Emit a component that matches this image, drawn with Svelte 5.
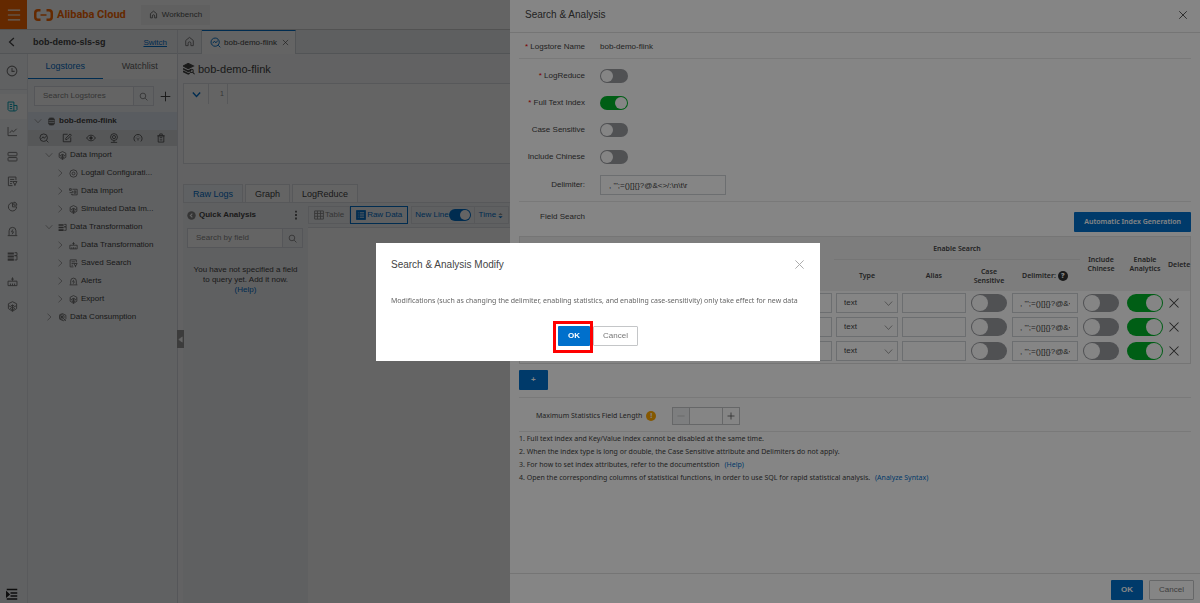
<script>
  const icons = {
    menu: '<path d="M1 2.500h14M1 8h14M1 13.500h14"/>',
    clock: '<circle cx="8" cy="8" r="6.500"/><path d="M8 4v4.500h3.500"/>',
    doc: '<path d="M1.500 1.500h8.500v13H3.500l-2-2zM10 6.500h4.500v6l-2 2H10M4 5h3.500M4 8h3.500M4 11h3.500"/>',
    chart: '<path d="M1.500 1.500v12.500h13M4 10l3-3.500 2.500 2L14 4"/>',
    servers: '<rect x="1.500" y="2" width="13" height="5" rx="1"/><rect x="1.500" y="9.500" width="13" height="5" rx="1"/>',
    saved: '<path d="M13 6V1.500H2v12.500h6M4.500 5h6M4.500 8h3.500M4.500 11h2.500M8.500 8h6l-3 5zM11.500 11v3.500"/>',
    pie: '<path d="M8 2.500a6 6 0 1 0 6 6H8zM10 1.500v4.500h4.500a5 5 0 0 0-4.500-4.500z"/>',
    alert: '<path d="M3 13.500V7a5 5 0 0 1 10 0v6.500M1 14h14M8.500 5L6.500 8.500h3L7.500 12"/>',
    stack: '<path d="M1 3.500h9M1 8h9M1 12.500h9" stroke-width="3"/><path d="M11 2.500h3.500v4H11M11 7h3.500v6H11"/>',
    robot: '<path d="M1.500 7.500h13V14h-13zM8 7V2M6 4.500h4M5 14v-3M8 14v-3M11 14v-3"/>',
    cube: '<path d="M8 1l6 3v2.500L8 10 2 6.500V4zM2 6.500V11l6 4 6-4V6.500M8 5v10M5.500 6L8 7.500 10.500 6M4.500 10.500L8 13l3.500-2.500"/>',
    indent: '<path d="M1 2h14M6 6.500h9M6 10.500h9M1 14.500h14" stroke-width="2"/><path d="M0.500 5l4 3.500-4 3.500z" fill="currentColor"/>',
    home: '<path d="M2.500 14V6.500L8 2l5.500 4.500V14H10v-3.500a2 2 0 0 0-4 0V14z"/>',
    search: '<circle cx="7" cy="7" r="5"/><path d="M11 11l4 4"/>',
    look: '<circle cx="7.500" cy="7.500" r="6"/><path d="M12 12l3 3M4 9l2.500-3 2 2.500L11.500 5"/>',
    edit: '<path d="M9 2H2v12h12V7M6 10.500V8.500L13 1.500l2 2L8 10.500z"/>',
    eye: '<path d="M1 8c3.500-6 10.500-6 14 0-3.500 6-10.500 6-14 0z"/><circle cx="8" cy="8" r="2" fill="currentColor"/>',
    cam: '<circle cx="8" cy="6.500" r="5.500"/><circle cx="8" cy="6.500" r="2.500"/><path d="M8 12v2.500M3 15h10"/>',
    gauge: '<path d="M3.500 13.500a6.500 6.500 0 1 1 9 0M8 12V8M4.500 8h1M8 4.500v1M11.500 8h-1"/>',
    trash: '<path d="M3.500 4.500h9v10h-9zM2 4.500h12M6 4V1.500h4V4M6 7.500h4M6 11h4"/>',
    db: '<path d="M3 3.500c0-2.500 10-2.500 10 0v9c0 2.500-10 2.500-10 0z" fill="currentColor"/><path d="M3 6.500h10M3 10h10" stroke="#dde4ec"/>',
    target: '<circle cx="8" cy="8" r="6.500"/><circle cx="8" cy="8" r="2.500"/>',
    import: '<path d="M6 4h8.500v10H5M1 3h3v3H1zM1 10h5V7M3.500 13h3M9 7h3v4H9z"/>',
    consume: '<path d="M3 3l5-2 6 3v6l-4 4-7-3z"/><circle cx="7" cy="7" r="4"/><circle cx="7" cy="7" r="1.500" fill="currentColor"/><path d="M10 10l4 4"/>',
    right: '<path d="M5 1.500L12 8l-7 6.500"/>',
    left: '<path d="M11 1.500L4 8l7 6.500" stroke-width="2"/>',
    down: '<path d="M1.500 4.500L8 11.500l6.500-7"/>',
    fold: '<path d="M1.500 4.500L8 11.500l6.500-7" stroke-width="2.500"/>',
    close: '<path d="M2 2l12 12M14 2L2 14"/>',
    plus: '<path d="M8 1v14M1 8h14"/>',
    minus: '<path d="M1 8h14"/>',
    layers: '<path d="M0 4l7-3.500L14 4 7 7.500z" fill="currentColor"/><path d="M0 7.500l7 3.500 4-2M0 11l7 3.500 2-1" stroke-width="2.200"/><circle cx="11.500" cy="10.500" r="2.200"/><path d="M13 12.500l2.500 2.500"/>',
    grid: '<path d="M1 1.500h14v13H1zM1 5.500h14M1 10h14M5.500 1.500v13M10.500 1.500v13"/>',
    list: '<rect x="1" y="1" width="14" height="14" fill="currentColor"/><path d="M3 4.500h1M6 4.500h7M3 8h1M6 8h7M3 11.500h1M6 11.500h7" stroke="#fff"/>',
    back: '<circle cx="8" cy="8" r="7.500" fill="currentColor" stroke="none"/><path d="M9.500 4.500L6 8l3.500 3.500" stroke="#fff" stroke-width="2"/>',
    dots: '<path d="M8 1v3M8 6.500v3M8 12v3" stroke-width="2.500"/>',
    sort: '<path d="M3 7l5-5 5 5z" fill="#999" stroke="none"/><path d="M3 9.500l5 5 5-5z" fill="currentColor" stroke="none"/>',
    caret: '<path d="M12 2v12L4 8z" fill="currentColor"/>'
  };
  const rail = ['doc', 'chart', 'servers', 'saved', 'pie', 'alert', 'stack', 'robot', 'cube'];
  const actions = ['look', 'edit', 'eye', 'cam', 'gauge', 'trash'];
  const tree = [
    { level: 1, open: true, icon: 'cube', text: 'Data Import' },
    { level: 2, icon: 'target', text: 'Logtail Configurati...' },
    { level: 2, icon: 'import', text: 'Data Import' },
    { level: 2, icon: 'cube', text: 'Simulated Data Im...' },
    { level: 1, open: true, icon: 'stack', text: 'Data Transformation' },
    { level: 2, icon: 'robot', text: 'Data Transformation' },
    { level: 2, icon: 'saved', text: 'Saved Search' },
    { level: 2, icon: 'alert', text: 'Alerts' },
    { level: 2, icon: 'cube', text: 'Export' },
    { level: 1, icon: 'consume', text: 'Data Consumption' }
  ];
  const switches = [
    { id: 'reduce', label: 'LogReduce', required: true, on: false },
    { id: 'fulltext', label: 'Full Text Index', required: true, on: true },
    { id: 'case', label: 'Case Sensitive', on: false },
    { id: 'chinese', label: 'Include Chinese', on: false }
  ];
  const delimiter = ', \'";=()[]{}?@&<>/:\\n\\t\\r';
  const rows = [1, 2, 3];
</script>

{#snippet icon(name, size = 10)}
  <svg class="icon" width={size} height={size} viewBox="0 0 16 16" aria-hidden="true">{@html icons[name]}</svg>
{/snippet}

<div class="page">
  <header class="top">
    <button class="burger" aria-label="Menu">{@render icon('menu', 14)}</button>
    <a class="logo" href="#home">
      <svg width="19" height="12" viewBox="0 0 38 24" aria-hidden="true">
        <path d="M13 2.500H8Q2.500 2.500 2.500 8v8q0 5.500 5.500 5.500h5M25 2.500h5q5.500 0 5.500 5.500v8q0 5.500-5.500 5.500h-5" fill="none" stroke="currentColor" stroke-width="5"/>
        <path d="M13 12h12" stroke="currentColor" stroke-width="3"/>
      </svg>
      <span>Alibaba Cloud</span>
    </a>
    <button class="workbench">{@render icon('home', 9)}Workbench</button>
  </header>

  <div class="body">
    <div class="side">
      <div class="project">
        <button class="plain" aria-label="Back">{@render icon('left', 10)}</button>
        <strong>bob-demo-sls-sg</strong>
        <a href="#switch">Switch</a>
      </div>
      <div class="side-body">
        <nav class="rail">
          <button class="rail-item first" aria-label="Recent">{@render icon('clock', 12)}</button>
          {#each rail as name, i}
            <button class="rail-item" class:active={i === 0} aria-label={name}>{@render icon(name, 11)}</button>
          {/each}
          <button class="rail-item last" aria-label="Expand">{@render icon('indent', 12)}</button>
        </nav>
        <div class="panel">
          <div class="panel-tabs">
            <button class="active">Logstores</button>
            <button>Watchlist</button>
          </div>
          <div class="find">
            <input aria-label="Search Logstores" placeholder="Search Logstores" />
            <button class="find-btn" aria-label="Search">{@render icon('search', 9)}</button>
            <button class="plain add" aria-label="Add">{@render icon('plus', 11)}</button>
          </div>
          <div class="node root"><span class="chev">{@render icon('down', 8)}</span>{@render icon('db', 9)}<strong>bob-demo-flink</strong></div>
          <div class="actions">
            {#each actions as name}
              <button class="plain" aria-label={name}>{@render icon(name, 10)}</button>
            {/each}
          </div>
          {#each tree as n}
            <div class="node" class:deep={n.level === 2}>
              <span class="chev">{@render icon(n.open ? 'down' : 'right', 8)}</span>{@render icon(n.icon, 9)}<span>{n.text}</span>
            </div>
          {/each}
        </div>
      </div>
    </div>

    <main>
      <div class="tabs">
        <button class="home" aria-label="Home">{@render icon('home', 11)}</button>
        <div class="tab"><span class="blue">{@render icon('look', 11)}</span><span>bob-demo-flink</span><button class="plain" aria-label="Close tab">{@render icon('close', 7)}</button></div>
      </div>
      <h1>{@render icon('layers', 12)}bob-demo-flink</h1>
      <div class="editor">
        <button class="fold" aria-label="Expand query">{@render icon('fold', 9)}</button>
        <span class="line-no">1</span>
        <textarea aria-label="Query"></textarea>
      </div>
      <div class="views">
        <button class="active">Raw Logs</button>
        <button>Graph</button>
        <button>LogReduce</button>
      </div>
      <div class="results">
        <section class="quick">
          <div class="quick-head"><span class="grey">{@render icon('back', 9)}</span><strong>Quick Analysis</strong><button class="plain" aria-label="More">{@render icon('dots', 10)}</button></div>
          <div class="find field">
            <input aria-label="Search by field" placeholder="Search by field" />
            <button class="find-btn" aria-label="Search fields">{@render icon('search', 9)}</button>
          </div>
          <p>You have not specified a field<br />to query yet. Add it now.<br /><a href="#help">(Help)</a></p>
        </section>
        <section class="logs">
          <div class="toolbar">
            <button class="seg muted">{@render icon('grid', 10)}Table</button>
            <button class="seg chosen">{@render icon('list', 10)}Raw Data</button>
            <label class="seg newline">New Line<input class="toggle blue-toggle" type="checkbox" checked /></label>
            <button class="seg time">Time {@render icon('sort', 7)}</button>
          </div>
          <div class="blank"></div>
        </section>
      </div>
      <button class="handle" aria-label="Collapse">{@render icon('caret', 7)}</button>
    </main>
  </div>
</div>

<div class="mask light"></div>

<aside class="drawer">
  <header><h2>Search &amp; Analysis</h2><button class="plain" aria-label="Close panel">{@render icon('close', 10)}</button></header>
  <div class="content">
    <div class="row name"><span class="label"><i>*</i> Logstore Name</span><span>bob-demo-flink</span></div>
    <div class="group">
      {#each switches as s}
        <div class="row switch">
          <label class="label" for={s.id}>{#if s.required}<i>*</i>{/if} {s.label}</label>
          <input id={s.id} class="toggle" type="checkbox" checked={s.on} />
        </div>
      {/each}
      <div class="row delim">
        <label class="label" for="delim">Delimiter:</label>
        <input id="delim" class="box" value={delimiter} />
      </div>
    </div>
    <div class="row fields"><span class="label">Field Search</span><button class="primary">Automatic Index Generation</button></div>
    <table>
      <colgroup><col /><col class="c66" /><col class="c68" /><col class="c42" /><col class="c70" /><col class="c42" /><col class="c46" /><col class="c22" /></colgroup>
      <thead>
        <tr class="h1"><th rowspan="2">Key Name</th><th colspan="4" class="span">Enable Search</th><th rowspan="2">Include Chinese</th><th rowspan="2">Enable Analytics</th><th rowspan="2" class="tight">Delete</th></tr>
        <tr class="h2"><th>Type</th><th>Alias</th><th>Case Sensitive</th><th><span class="q">Delimiter: <b>?</b></span></th></tr>
      </thead>
      <tbody>
        {#each rows as r}
          <tr>
            <td><input class="box" aria-label="Key name {r}" /></td>
            <td><div class="pick"><select class="box" aria-label="Type {r}"><option>text</option></select>{@render icon('down', 9)}</div></td>
            <td><input class="box" aria-label="Alias {r}" /></td>
            <td><input class="toggle big" type="checkbox" aria-label="Case sensitive {r}" /></td>
            <td><input class="box" aria-label="Delimiter {r}" value={delimiter} /></td>
            <td><input class="toggle big" type="checkbox" aria-label="Include Chinese {r}" /></td>
            <td><input class="toggle big" type="checkbox" checked aria-label="Enable analytics {r}" /></td>
            <td class="tight"><button class="plain" aria-label="Delete {r}">{@render icon('close', 12)}</button></td>
          </tr>
        {/each}
      </tbody>
    </table>
    <button class="primary more">+</button>
    <div class="limit">
      <label for="max">Maximum Statistics Field Length</label><b class="warn">!</b>
      <div class="stepper"><button disabled aria-label="Decrease">{@render icon('minus', 8)}</button><input id="max" /><button aria-label="Increase">{@render icon('plus', 8)}</button></div>
    </div>
    <ol>
      <li>1. Full text index and Key/Value index cannot be disabled at the same time.</li>
      <li>2. When the index type is long or double, the Case Sensitive attribute and Delimiters do not apply.</li>
      <li>3. For how to set index attributes, refer to the documentstion <a href="#docs">(Help)</a></li>
      <li>4. Open the corresponding columns of statistical functions, in order to use SQL for rapid statistical analysis. <a href="#syntax">(Analyze Syntax)</a></li>
    </ol>
  </div>
  <footer><button class="primary">OK</button><button class="ghost">Cancel</button></footer>
</aside>

<div class="mask dark">
  <div class="modal" role="dialog" aria-labelledby="modal-title">
    <header><h2 id="modal-title">Search &amp; Analysis Modify</h2><button class="plain" aria-label="Close dialog">{@render icon('close', 11)}</button></header>
    <p>Modifications (such as changing the delimiter, enabling statistics, and enabling case-sensitivity) only take effect for new data</p>
    <div class="buttons"><span class="marked"><button class="primary">OK</button></span><button class="ghost">Cancel</button></div>
  </div>
</div>

<style>
  :global(body) { font: 8px/12px "Liberation Sans", Arial, sans-serif; color: #444; background: #fff; }
  :global(*) { box-sizing: border-box; }
  button, input, select, textarea { font: inherit; color: inherit; margin: 0; padding: 0; border: 0; background: none; border-radius: 0; outline: 0; }
  h1, h2, p, ol { margin: 0; padding: 0; font-weight: 400; }
  a { color: #0070cc; text-decoration: none; }
  .icon { display: block; flex: none; fill: none; stroke: currentColor; stroke-width: 1.4; }
  .plain { display: grid; place-items: center; }
  .blue { color: #0070cc; }
  .grey { color: #888; }

  .page { min-height: 100vh; display: flex; flex-direction: column; }
  .top { display: flex; align-items: center; height: 30px; border-bottom: 1px solid #d0d0d0; }
  .burger { width: 27px; height: 29px; display: grid; place-items: center; background: #ff6a00; color: #fff; }
  .logo { display: flex; align-items: center; gap: 4px; margin-left: 7px; color: #ff6a00; font: 700 11px/16px Roboto, "Liberation Sans", sans-serif; white-space: nowrap; }
  .workbench { display: flex; align-items: center; gap: 4px; margin-left: 15px; padding: 0 8px; height: 20px; background: #f4f5f5; color: #555; }

  .body { flex: 1; display: flex; }
  .side { width: 178px; flex: none; display: flex; flex-direction: column; background: #f5f7fa; border-right: 1px solid #d8dce2; }
  .project { display: flex; align-items: center; height: 24px; padding: 0 10px 0 7px; border-bottom: 1px solid #d0d5db; background: #eff1f5; }
  .project strong { flex: 1; margin-left: 16px; font-size: 9px; }
  .project a { text-decoration: underline; padding-top: 2px; }
  .side-body { flex: 1; display: flex; }
  .rail { width: 28px; flex: none; display: flex; flex-direction: column; border-right: 1px solid #e2e5ea; color: #777; }
  .rail-item { height: 25px; padding-right: 3px; display: grid; place-items: center; }
  .rail-item.first { height: 36px; padding-bottom: 2px; margin-bottom: 4px; border-bottom: 1px solid #e2e5ea; }
  .rail-item.active { background: #fff; color: #00a2b8; }
  .rail-item.last { margin-top: auto; height: 18px; color: #222; }
  .panel { flex: 1; min-width: 0; }
  .panel-tabs { display: grid; grid-template-columns: 1fr 1fr; height: 25px; font-size: 9px; background: #fff; color: #666; }
  .panel-tabs button { border-bottom: 1px solid transparent; }
  .panel-tabs .active { color: #0070cc; border-color: #0070cc; }
  .find { display: flex; height: 20px; margin: 7px 6px 6px 6px; }
  .find input { flex: 1; min-width: 0; padding: 0 8px; border: 1px solid #d8dce2; background: #fff; }
  .find input::placeholder { color: #888; opacity: 1; }
  .find-btn { width: 20px; display: grid; place-items: center; border: 1px solid #d8dce2; border-left: 0; color: #777; }
  .add { width: 22px; margin-right: -5px; color: #444; }
  .node { display: flex; align-items: center; gap: 3px; height: 18px; padding-left: 17px; white-space: nowrap; }
  .node.deep { padding-left: 28px; }
  .node .chev { margin-right: 2px; color: #888; }
  .node > :global(svg) { color: #666; }
  .node.root { padding-left: 6px; background: #e4ebf5; }
  .actions { display: grid; grid-template-columns: repeat(6, 1fr); padding: 0 4px; height: 16px; background: #dadde0; color: #555; }
  strong, .primary, th { font-weight: 700; }
  th, .fields .primary, .limit label, ol, .modal p { font-family: "Noto Sans", "Liberation Sans", sans-serif; font-size: 7px; }
  th, .fields .primary { font-weight: 600; }

  main { position: relative; flex: 1; min-width: 0; display: flex; flex-direction: column; background: #f9fafb; }
  .tabs { display: flex; height: 24px; border-bottom: 1px solid #d0d5db; background: #eff1f5; }
  .home { width: 24px; display: grid; place-items: center; color: #777; border-right: 1px solid #d0d5db; }
  .tab { display: flex; align-items: center; gap: 3px; height: 24px; padding: 0 6px 0 8px; border-top: 1px solid #0070cc; border-right: 1px solid #d0d5db; background: #fff; }
  .tab button { margin-left: 2px; }
  h1 { display: flex; align-items: center; gap: 3px; height: 29px; padding-left: 5px; font-size: 11px; }
  .editor { display: flex; height: 81px; margin-left: 5px; border: 1px solid #dde1e6; border-right: 0; background: #fff; align-items: flex-start; }
  .fold { width: 25px; height: 20px; display: grid; place-items: center; color: #0070cc; border-right: 1px solid #dde1e6; }
  .line-no { width: 19px; height: 20px; line-height: 20px; text-align: right; padding-right: 3px; border-right: 1px solid #dde1e6; font-size: 7px; color: #888; }
  .editor textarea { flex: 1; align-self: stretch; resize: none; }
  .views { display: flex; gap: 2px; height: 19px; margin: 20px 0 0 5px; font-size: 9px; border-bottom: 1px solid #dde1e6; }
  .views button { padding: 0 9px; border: 1px solid #dde1e6; border-bottom: 0; background: #fff; }
  .views .active { color: #0070cc; background: #f2f6fb; }
  .results { flex: 1; display: flex; margin-left: 5px; background: #f3f5f8; }
  .quick { width: 125px; flex: none; }
  .quick-head { display: flex; align-items: center; gap: 3px; height: 24px; padding: 0 7px 0 4px; }
  .quick-head strong { flex: 1; }
  .find.field { margin: 1px 5px 17px 4px; }
  .quick p { text-align: center; line-height: 10px; }
  .logs { flex: 1; display: flex; flex-direction: column; }
  .toolbar { display: flex; height: 24px; padding: 3px 0; }
  .seg { display: flex; align-items: center; gap: 1px; padding: 0 5px; border: 1px solid #dde1e6; color: #0070cc; white-space: nowrap; }
  .muted { color: #888; }
  .chosen { border-color: #0070cc; }
  .newline { margin-left: 3px; padding: 0 3px; gap: 0; }
  .time { padding: 0 4px; border-left: 0; }
  .blank { flex: 1; background: #fff; border-top: 1px solid #dde1e6; }
  .handle { position: absolute; left: -1px; top: 300px; width: 7px; height: 18px; display: grid; place-items: center; background: #999; color: #fff; }

  .toggle { appearance: none; flex: none; width: 28px; height: 14px; padding: 1px; border-radius: 9px; background: #999ba0; display: flex; }
  .toggle::before { content: ""; width: 12px; height: 12px; border-radius: 50%; background: #fff; }
  .toggle:checked { background: #00b42a; justify-content: flex-end; }
  .toggle.big { width: 36px; height: 18px; margin: 0 auto; }
  .toggle.big::before { width: 16px; height: 16px; }
  .toggle.blue-toggle { width: 22px; height: 12px; background: #0070cc; }
  .blue-toggle::before { width: 10px; height: 10px; }

  .mask { position: fixed; inset: 0; }
  .light { background: rgba(0, 0, 0, 0.25); }
  .dark { background: rgba(0, 0, 0, 0.48); display: grid; place-items: center; padding-right: 4px; }

  .drawer { position: fixed; inset: 0 0 0 auto; width: 57.5%; display: flex; flex-direction: column; background: #fff; }
  .drawer header { display: flex; align-items: center; justify-content: space-between; height: 33px; padding: 0 12px 2px 15px; border-bottom: 1px solid #e0e0e0; }
  h2 { font-size: 10px; line-height: 14px; }
  .content { flex: 1; padding: 0 9px; }
  .row { display: flex; align-items: center; gap: 15px; }
  .label { width: 66px; text-align: right; white-space: nowrap; }
  .label i { color: #e00; font-style: normal; }
  .name { height: 26px; padding-top: 2px; border-bottom: 1px solid #e8e8e8; }
  .group { display: flex; flex-direction: column; padding: 3px 0 5px; border-bottom: 1px solid #e8e8e8; }
  .switch { height: 27px; }
  .delim { height: 26px; padding-top: 4px; }
  .box { width: 100%; height: 20px; border: 1px solid #d0d3d6; padding: 0 8px; background: #fff; }
  td .box { padding: 0 7px; }
  .delim .box { width: 126px; }
  .fields { height: 34px; justify-content: space-between; align-items: flex-end; }
  .fields .label { align-self: center; padding-bottom: 4px; }
  .fields .primary { margin-bottom: 4px; }
  .primary { height: 20px; padding: 0 10px; background: #0070cc; color: #fff; border-radius: 1px; white-space: nowrap; }
  .ghost { height: 20px; padding: 0 9px; border: 1px solid #c4c6c8; color: #777; border-radius: 1px; background: #fff; }
  table { width: 100%; table-layout: fixed; border-collapse: separate; border-spacing: 0; border: 1px solid #e0e0e0; }
  th { padding: 0 1px; background: #efeff0; line-height: 9px; }
  td { height: 24px; padding: 0 2px; }
  .tight { padding: 0; }
  .h1 { height: 23px; }
  .h2 { height: 31px; }
  .span { border-bottom: 1px solid #e0e0e0; }
  .c66 { width: 66px; } .c68 { width: 68px; } .c42 { width: 42px; } .c70 { width: 70px; } .c46 { width: 46px; } .c22 { width: 22px; }
  .q { display: inline-flex; align-items: center; gap: 2px; white-space: nowrap; }
  .q b { width: 10px; height: 10px; line-height: 10px; border-radius: 50%; background: #333; color: #fff; }
  .pick { display: grid; align-items: center; }
  .pick select, .pick > :global(svg) { grid-area: 1 / 1; }
  .pick select { appearance: none; }
  .pick > :global(svg) { justify-self: end; margin-right: 5px; color: #888; pointer-events: none; }
  .more { display: block; margin-top: 6px; padding: 0 12px; }
  .limit { display: flex; align-items: center; margin-top: 7px; height: 35px; padding: 2px 0 0 17px; border: solid #e8e8e8; border-width: 1px 0; }
  .warn { width: 10px; height: 10px; margin-left: 4px; line-height: 10px; text-align: center; border-radius: 50%; background: #ffa800; color: #fff; }
  .stepper { display: flex; height: 18px; margin-left: 16px; border: 1px solid #c4c6c8; }
  .stepper button { width: 16px; display: grid; place-items: center; }
  .stepper button:disabled { background: #eff1f3; color: #bbb; }
  .stepper input { width: 34px; border: solid #c4c6c8; border-width: 0 1px; }
  ol { list-style: none; line-height: 13px; }
  ol a { margin-left: 3px; }
  footer { display: flex; justify-content: flex-end; align-items: center; gap: 6px; height: 30px; padding: 3px 6px 0; border-top: 1px solid #e0e0e0; }

  .modal { min-width: 444px; background: #fff; padding: 15px; }
  .modal header { display: flex; justify-content: space-between; align-items: center; color: #444; }
  .modal header .plain { color: #aaa; }
  .modal p { margin-top: 23px; color: #666; white-space: nowrap; }
  .buttons { display: flex; justify-content: center; gap: 3px; margin-top: 19px; }
  .marked { position: relative; }
  .marked::after { content: ""; position: absolute; inset: -5px -3px -7px -5px; border: 3px solid #f00; pointer-events: none; }
</style>
